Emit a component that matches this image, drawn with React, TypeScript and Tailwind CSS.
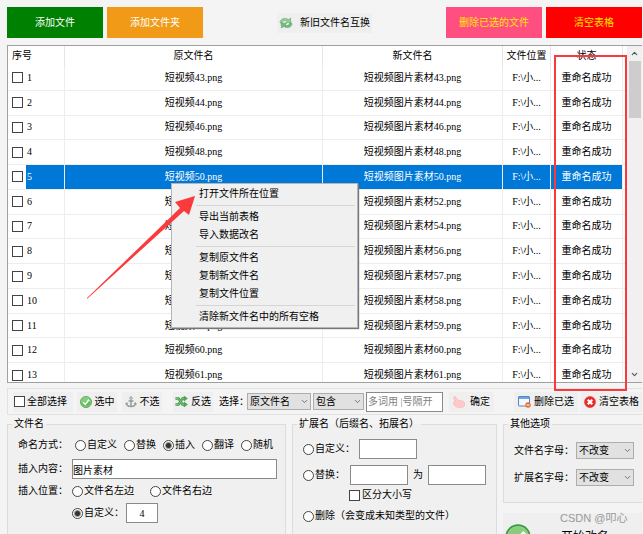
import React from "react";
import { ChevronDown, ChevronUp } from "lucide-react";

const rows = [43, 44, 46, 48, 50, 52, 54, 56, 57, 58, 59, 60, 61];
const SELECTED = 4;

const menuGroups = [
  ["打开文件所在位置"],
  ["导出当前表格", "导入数据改名"],
  ["复制原文件名", "复制新文件名", "复制文件位置"],
  ["清除新文件名中的所有空格"],
];

function Radio({ label, name, checked = false }: { label: string; name: string; checked?: boolean }) {
  return (
    <label className="flex items-center gap-px whitespace-nowrap">
      <input
        type="radio"
        name={name}
        defaultChecked={checked}
        className="size-[11px] shrink-0 appearance-none rounded-full border border-[#444] bg-white checked:bg-[radial-gradient(circle,#333_2px,#fff_4px)]"
      />
      {label}
    </label>
  );
}

function Check({ label, hidden = false }: { label: string; hidden?: boolean }) {
  return (
    <label className="flex items-center gap-[2px] whitespace-nowrap">
      <input
        type="checkbox"
        aria-label={label}
        className="size-[11px] shrink-0 appearance-none border border-[#444] bg-white checked:bg-[#0078d7]"
      />
      {!hidden && label}
    </label>
  );
}

function Select({ label, options, className }: { label: string; options: string[]; className: string }) {
  return (
    <span className={"grid shrink-0 items-center " + className}>
      <select
        aria-label={label}
        className="col-start-1 row-start-1 h-full w-full appearance-none border border-[#adadad] bg-[#e1e1e1] pl-[2px]"
      >
        {options.map((o) => (
          <option key={o}>{o}</option>
        ))}
      </select>
      <ChevronDown className="pointer-events-none col-start-1 row-start-1 mr-[2px] size-[9px] justify-self-end text-[#555]" />
    </span>
  );
}

function TextBox({ label, value, className }: { label: string; value?: string; className: string }) {
  return (
    <input
      type="text"
      aria-label={label}
      defaultValue={value}
      className={"h-5 border border-[#8a8a8a] bg-white " + className}
    />
  );
}

function ToolButton({ icon, label, className = "" }: { icon: React.ReactNode; label: string; className?: string }) {
  return (
    <button className={"flex h-5 shrink-0 items-center justify-center gap-[3px] whitespace-nowrap bg-[#efefef] " + className}>
      {icon}
      {label}
    </button>
  );
}

function CheckIcon({ className }: { className: string }) {
  return (
    <svg viewBox="0 0 24 24" className={className}>
      <circle cx="12" cy="12" r="11" fill="#5dbb56" stroke="#3c9a45" strokeWidth="1.5" />
      <circle cx="12" cy="12" r="9.500" fill="none" stroke="#a5dc9c" strokeWidth="1" />
      <path d="M3 11a9 8.500 0 0 1 18 0q-9-3-18 3z" fill="#86cd7c" />
      <path d="m6.500 12.500 4 4 7.500-9" fill="none" stroke="#fff" strokeWidth="3.500" />
    </svg>
  );
}

function RecycleIcon() {
  return (
    <svg viewBox="0 0 28 24" className="h-3 w-[14px] shrink-0">
      <path d="M2 11C2 4 11 0 19 5l4-3 1 10-11-1 3-3c-4-2-8-1-10 4z" fill="#8bcf92" stroke="#579f64" />
      <path d="M26 13c0 7-9 11-17 6l-4 3-1-10 11 1-3 3c4 2 8 1 10-4z" fill="#74bd7e" stroke="#4a9257" />
    </svg>
  );
}

function ShuffleIcon() {
  return (
    <svg viewBox="0 0 26 22" className="h-[11px] w-[13px] shrink-0">
      <g fill="none" stroke="#3f9b49" strokeWidth="5">
        <path d="M1 5h6l8 12h4" />
        <path d="M1 17h6l8-12h4" />
      </g>
      <g fill="none" stroke="#7cc67f" strokeWidth="2">
        <path d="M1 5h6l8 12h4" />
        <path d="M1 17h6l8-12h4" />
      </g>
      <path d="m18 0 7 5-7 5zM18 12l7 5-7 5z" fill="#51aa58" stroke="#3a9145" />
    </svg>
  );
}

function AnchorIcon() {
  return (
    <svg viewBox="0 0 24 24" className="size-3 shrink-0" fill="none" stroke="#9b9b9b" strokeWidth="3">
      <circle cx="12" cy="4" r="2.500" strokeWidth="2" />
      <path d="M12 7v14M7 10h10" />
      <path d="M3 14c0 5 4 7 9 7s9-2 9-7" />
      <path d="m0 17 3-5 4 4zM24 17l-3-5-4 4z" fill="#9b9b9b" stroke="none" />
    </svg>
  );
}

function HandIcon() {
  return (
    <svg viewBox="0 0 24 24" className="size-3 shrink-0">
      <path
        d="M2 2c2-2 4 0 5 2l5 7c0-2 2-4 4-2l1 1c2-1 3 0 4 2 2 0 3 2 3 5 0 4-4 6-9 6-6 0-10-1-13-5-2-3-1-4 1-4-2-2-2-4 0-4h2L1 5z"
        fill="#ffc9c9"
        stroke="#f5adaf"
      />
    </svg>
  );
}

function WindowIcon() {
  return (
    <svg viewBox="0 0 26 24" className="h-3 w-[13px] shrink-0">
      <rect x="1" y="1" width="22" height="19" rx="1" fill="#f5f9ff" stroke="#5585c5" strokeWidth="2" />
      <path d="M2 2h20v4H2z" fill="#6ea5e6" />
      <circle cx="20" cy="18" r="5.500" fill="#e8702a" />
      <path d="M17 18h6" stroke="#fff" strokeWidth="2" />
    </svg>
  );
}

function CloseIcon() {
  return (
    <svg viewBox="0 0 24 24" className="size-3 shrink-0">
      <circle cx="12" cy="12" r="11" fill="#ee2a2a" stroke="#cf2024" />
      <path d="m7.500 7.500 9 9M16.500 7.500l-9 9" stroke="#fff" strokeWidth="4.500" />
    </svg>
  );
}

export default function App() {
  return (
    <div className="flex h-screen flex-col overflow-hidden bg-[#f4f4f4] pt-[7px] pr-px pl-[7px] font-['Liberation_Serif','Noto_Sans_CJK_SC',sans-serif] text-[10px] leading-[14px] text-black">
      <header className="flex shrink-0 items-center justify-between">
        <div className="flex gap-1">
          <button className="h-[31px] w-24 bg-[#008000] text-white">添加文件</button>
          <button className="h-[31px] w-24 bg-[#f19a18] text-white">添加文件夹</button>
        </div>
        <button className="flex h-5 items-center gap-[7px] bg-[#efefef] px-[2px]">
          <RecycleIcon />
          新旧文件名互换
        </button>
        <div className="flex gap-1">
          <button className="h-[31px] w-24 bg-[#ff4f81] text-[#ffe600]">删除已选的文件</button>
          <button className="h-[31px] w-24 bg-[#ff0000] text-[#ffe600]">清空表格</button>
        </div>
      </header>

      <main className="relative mt-[7px] shrink-0">
        <div className="flex h-[338px] overflow-hidden border border-r-0 border-[#a0a0a0] bg-white">
          <div className="min-w-0 flex-1 overflow-hidden">
            <table className="h-[342px] w-full table-fixed border-separate border-spacing-0 text-center">
              <colgroup>
                <col className="w-[57px]" />
                <col />
                <col className="w-[180px]" />
                <col className="w-12" />
                <col className="w-[72px]" />
                <col className="w-1" />
              </colgroup>
              <thead>
                <tr className="h-5">
                  {["序号", "原文件名", "新文件名", "文件位置", "状态"].map((h, i) => (
                    <th
                      key={h}
                      className={"h-5 border-r border-[#e5e5e5] p-0 font-normal " + (i === 0 ? "pl-1 text-left" : "")}
                    >
                      {h}
                    </th>
                  ))}
                  <td />
                </tr>
              </thead>
              <tbody>
                {rows.map((n, i) => {
                  const on = i === SELECTED;
                  const cell = "border-r border-b border-[#ededed] p-0 whitespace-nowrap " + (on ? "bg-[#0078d7] text-white" : "");
                  return (
                    <tr key={n}>
                      <td
                        className={
                          "border-r border-b border-[#ededed] p-0 " +
                          (on ? "bg-[linear-gradient(to_right,#fff_18px,#0078d7_18px)] text-white" : "")
                        }
                      >
                        <div className="flex items-center gap-1 pl-1">
                          <Check label={"选择第" + (i + 1) + "行"} hidden />
                          {i + 1}
                        </div>
                      </td>
                      <td className={cell}>短视频{n}.png</td>
                      <td className={cell}>短视频图片素材{n}.png</td>
                      <td className={cell}>F:\小...</td>
                      <td className={cell}>重命名成功</td>
                      <td className="border-b border-[#ededed]" />
                    </tr>
                  );
                })}
              </tbody>
            </table>
          </div>
          <div className="flex w-[15px] shrink-0 flex-col items-center justify-between bg-[#f0f0f0] py-[3px] text-[#555]">
            <ChevronUp className="size-[9px]" strokeWidth={3} />
            <div className="mt-[3px] mb-auto h-[57px] w-3 bg-[#cdcdcd]" />
            <ChevronDown className="size-[9px]" strokeWidth={3} />
          </div>
        </div>

        <div
          role="menu"
          className="absolute top-[138px] left-[164px] w-[187px] border border-[#b5b5b5] bg-[#f0f0f0] py-px pr-[2px] pl-6 shadow-[1px_1px_1px_#777]"
        >
          {menuGroups.map((g, i) => (
            <div key={i} className={i > 0 ? "mt-[2px] border-t border-[#d5d5d5] pt-[2px]" : ""}>
              {g.map((t) => (
                <button key={t} role="menuitem" className="block h-[18px] w-full pl-[3px] text-left">
                  {t}
                </button>
              ))}
            </div>
          ))}
        </div>

        <svg viewBox="0 0 110 106" className="pointer-events-none absolute top-[149px] left-[79px] h-[106px] w-[110px]">
          <path d="M1 104 94 14 89 8 109 2 103 21 98 17 1 105z" fill="#fb3b3b" />
        </svg>
        <div className="pointer-events-none absolute top-[10px] right-[15px] h-[336px] w-[73px] border-2 border-[#f93a3d]" />
      </main>

      <div className="mt-[5px] flex h-[27px] shrink-0 items-center border border-r-0 border-[#e2e2e2] pl-[5px]">
        <div className="flex h-5 w-[60px] items-center bg-[#efefef] pl-px">
          <Check label="全部选择" />
        </div>
        <ToolButton className="ml-1 w-10" icon={<CheckIcon className="size-3 shrink-0" />} label="选中" />
        <ToolButton className="ml-[5px] w-10" icon={<AnchorIcon />} label="不选" />
        <ToolButton className="ml-[11px] w-10" icon={<ShuffleIcon />} label="反选" />
        <span className="ml-[6px] w-7 whitespace-nowrap">选择：</span>
        <Select label="选择字段" options={["原文件名", "新文件名"]} className="h-[17px] w-16" />
        <Select label="匹配方式" options={["包含", "不包含"]} className="ml-[2px] h-[17px] w-[51px]" />
        <input
          type="text"
          aria-label="多词用|号隔开"
          placeholder="多词用 |号隔开"
          className="ml-[2px] h-5 w-[77px] border border-[#8a8a8a] bg-white pl-px placeholder:text-[#808080]"
        />
        <ToolButton className="ml-[6px] w-[45px] gap-[5px]" icon={<HandIcon />} label="确定" />
        <ToolButton className="ml-auto w-16" icon={<WindowIcon />} label="删除已选" />
        <ToolButton className="ml-[3px] w-[61px]" icon={<CloseIcon />} label="清空表格" />
      </div>

      <div className="mt-[2px] flex min-h-0 flex-1 items-stretch gap-[6px]">
        <fieldset className="min-w-0 flex-1 border border-b-0 border-[#dcdcdc] bg-[#f0f0f0] pl-[10px]">
          <legend className="-ml-[6px] px-[2px]">文件名</legend>
          <div className="grid grid-cols-[54px_auto] items-center">
            <span className="h-7 whitespace-nowrap leading-7">命名方式：</span>
            <div className="flex gap-[7px] pl-[3px]">
              <Radio name="mode" label="自定义" />
              <Radio name="mode" label="替换" />
              <Radio name="mode" label="插入" checked />
              <Radio name="mode" label="翻译" />
              <Radio name="mode" label="随机" />
            </div>
            <span className="whitespace-nowrap">插入内容：</span>
            <TextBox label="插入内容" value="图片素材" className="mr-2" />
            <span className="h-6 whitespace-nowrap leading-6">插入位置：</span>
            <div className="flex gap-4">
              <Radio name="pos" label="文件名左边" />
              <Radio name="pos" label="文件名右边" />
            </div>
            <div className="col-start-2 flex items-center gap-[2px]">
              <Radio name="pos" label="自定义：" checked />
              <TextBox label="自定义位置" value="4" className="w-8 text-center" />
            </div>
          </div>
        </fieldset>

        <fieldset className="w-[205px] shrink-0 border border-b-0 border-[#dcdcdc] bg-[#f0f0f0] pl-[10px]">
          <legend className="-ml-[6px] px-[2px]">扩展名（后缀名、拓展名）</legend>
          <div className="flex flex-col pt-2">
            <div className="flex items-center gap-1">
              <Radio name="ext" label="自定义：" />
              <TextBox label="自定义扩展名" className="w-[58px]" />
            </div>
            <div className="mt-[6px] flex items-center gap-[5px]">
              <Radio name="ext" label="替换：" />
              <TextBox label="原扩展名" className="w-[58px]" />
              为
              <TextBox label="新扩展名" className="w-[58px]" />
            </div>
            <div className="mt-[3px] pl-[46px]">
              <Check label="区分大小写" />
            </div>
            <div className="mt-[7px]">
              <Radio name="ext" label="删除（会变成未知类型的文件）" />
            </div>
          </div>
        </fieldset>

        <div className="flex w-[139px] shrink-0 flex-col gap-[10px]">
          <fieldset className="h-[86px] shrink-0 border border-r-0 border-[#dcdcdc] bg-[#f0f0f0] pl-[10px]">
            <legend className="-ml-[6px] px-[2px]">其他选项</legend>
            <div className="flex flex-col gap-[10px] pt-[11px]">
              {["文件名字母", "扩展名字母"].map((t) => (
                <div key={t} className="flex items-center">
                  <span className="w-[62px] whitespace-nowrap">{t}：</span>
                  <Select label={t} options={["不改变", "大写", "小写"]} className="h-[17px] w-[58px]" />
                </div>
              ))}
            </div>
          </fieldset>
          <div className="relative">
            <button className="flex h-12 w-full items-center gap-[30px] bg-[#efefef] pl-[2px] text-xs">
              <CheckIcon className="size-[26px]" />
              开始改名
            </button>
            <span className="absolute -top-[2px] left-[57px] whitespace-nowrap font-['Liberation_Sans','Noto_Sans_CJK_SC',sans-serif] text-[11px] text-[#999]">
              CSDN @叩心
            </span>
          </div>
        </div>
      </div>
    </div>
  );
}
